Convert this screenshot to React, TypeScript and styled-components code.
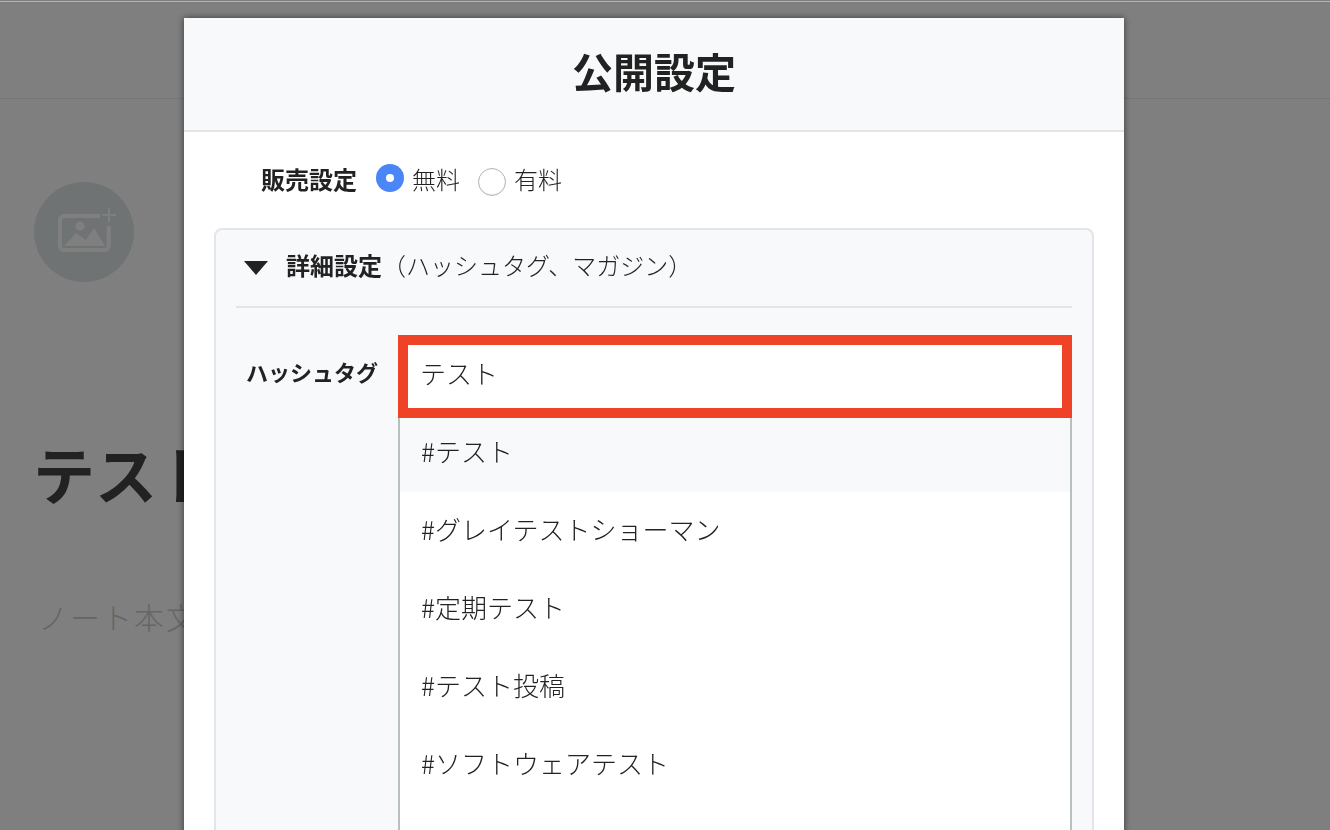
import React from 'react';
import styled, { createGlobalStyle } from 'styled-components';

const hashtags = ['#テスト', '#グレイテストショーマン', '#定期テスト', '#テスト投稿', '#ソフトウェアテスト', ''];

const App: React.FC = () => {
  return (
    <>
      <GlobalStyle />
      <Page>
        <TopBar />
        <Editor>
          <EyeCatch>
            <svg width='100' height='100' viewBox='0 0 100 100' fill='none'>
              <path
                d='M66 34H30a4 4 0 0 0-4 4v26a4 4 0 0 0 4 4h40.7a4 4 0 0 0 4-4V44'
                stroke='#fff'
                strokeWidth='4'
              />
              <path d='M75 26v14M68 33h14' stroke='#fff' strokeWidth='2' />
              <circle cx='46' cy='44' r='4.5' fill='#fff' />
              <path d='M30 64l12-13 10 7 8-12 11 18z' fill='#fff' />
            </svg>
          </EyeCatch>
          <NoteTitle>テスト</NoteTitle>
          <NoteBody>ノート本文</NoteBody>
        </Editor>
      </Page>
      <Overlay>
        <Modal>
          <ModalHeader>
            <h1>公開設定</h1>
          </ModalHeader>
          <SalesRow>
            <strong>販売設定</strong>
            <RadioOption>
              <Radio $checked />
              無料
            </RadioOption>
            <RadioOption>
              <Radio />
              有料
            </RadioOption>
          </SalesRow>
          <DetailBox>
            <DetailHead>
              <svg width='24' height='14' viewBox='0 0 24 14'>
                <path d='M0 0h24L12 14z' fill='#222' />
              </svg>
              <p>
                <strong>詳細設定</strong>（ハッシュタグ、マガジン）
              </p>
            </DetailHead>
            <TagRow>
              <TagLabel>ハッシュタグ</TagLabel>
              <TagField>
                <TagInput readOnly value='テスト' />
                <TagList>
                  {hashtags.map((tag, index) => (
                    <TagItem key={index} $active={index === 0}>
                      {tag}
                    </TagItem>
                  ))}
                </TagList>
              </TagField>
            </TagRow>
          </DetailBox>
        </Modal>
      </Overlay>
    </>
  );
};

const GlobalStyle = createGlobalStyle`
  html, body {
    margin: 0;
    height: 830px;
    overflow: hidden;
    background: #fff;
    color: #222;
    font-family: "Noto Sans CJK JP", "Noto Sans", sans-serif;
  }

  * {
    box-sizing: border-box;
  }
`;

const Page = styled.main`
  height: 830px;
`;

const TopBar = styled.header`
  height: 99px;
  border-bottom: 1px solid #ececec;
`;

const Editor = styled.section`
  padding: 83px 0 0 34px;
`;

const EyeCatch = styled.div`
  width: 100px;
  height: 100px;
  border-radius: 50%;
  background: #dfe6e8;
  display: flex;

  svg {
    display: block;
  }
`;

const NoteTitle = styled.h2`
  margin: 149px 0 0 -1px;
  font-size: 62px;
  line-height: 84px;
  font-weight: 700;
  color: #444;
`;

const NoteBody = styled.p`
  margin: 81px 0 0 4px;
  font-size: 30px;
  font-weight: 300;
  line-height: 40px;
  letter-spacing: 2px;
  color: #ccc;
`;

const Overlay = styled.div`
  position: fixed;
  inset: 0;
  background: rgba(0, 0, 0, 0.5);
  display: flex;
  justify-content: center;
  overflow: hidden;

  &::before {
    content: '';
    position: absolute;
    top: 1px;
    left: 0;
    right: 0;
    height: 1px;
    background: #b8b2b8;
  }
`;

const Modal = styled.div`
  width: 940px;
  height: 1100px;
  flex-shrink: 0;
  margin: 18px 0 0 -22px;
  background: #fff;
  box-shadow: 0 0 7px rgba(0, 0, 0, 0.55);
`;

const ModalHeader = styled.div`
  height: 114px;
  background: #f7f9fb;
  border-bottom: 2px solid #e3e5e8;
  display: flex;
  align-items: center;
  justify-content: center;

  h1 {
    margin: 0 0 8px;
    font-size: 41px;
    line-height: 56px;
    font-weight: 700;
  }
`;

const SalesRow = styled.div`
  height: 96px;
  padding: 0 0 4px 77px;
  display: flex;
  align-items: center;
  font-size: 24px;
  font-weight: 300;

  strong {
    font-weight: 700;
    margin-right: 19px;
  }
`;

const RadioOption = styled.label`
  display: flex;
  align-items: center;
  gap: 8px;
  margin-right: 18px;
`;

const Radio = styled.span<{ $checked?: boolean }>`
  width: 28px;
  height: 28px;
  border-radius: 50%;
  display: flex;
  align-items: center;
  justify-content: center;
  background: ${({ $checked }) => ($checked ? '#4a86f5' : '#fff')};
  border: ${({ $checked }) => ($checked ? 'none' : '1px solid #b4b4b4')};
  margin-top: ${({ $checked }) => ($checked ? '0' : '8px')};
  box-shadow: ${({ $checked }) => ($checked ? 'none' : 'inset 0 -1px 1px rgba(0, 0, 0, 0.08)')};

  &::after {
    content: '';
    display: ${({ $checked }) => ($checked ? 'block' : 'none')};
    width: 8px;
    height: 8px;
    border-radius: 50%;
    background: #fff;
  }
`;

const DetailBox = styled.div`
  width: 880px;
  margin-left: 30px;
  height: 800px;
  background: #f7f9fb;
  border: 2px solid #e3e5e8;
  border-radius: 8px;
  padding: 0 20px;
`;

const DetailHead = styled.div`
  height: 78px;
  padding: 0 0 8px 8px;
  border-bottom: 2px solid #e3e5e8;
  display: flex;
  align-items: center;
  gap: 18px;
  font-size: 24px;
  font-weight: 300;

  svg {
    flex-shrink: 0;
    margin-top: 8px;
  }

  p {
    margin: 0;
  }

  strong {
    font-weight: 700;
  }
`;

const TagRow = styled.div`
  display: flex;
  margin-top: 27px;
`;

const TagLabel = styled.div`
  width: 162px;
  padding: 20px 0 0 10px;
  font-size: 22px;
  line-height: 32px;
  font-weight: 700;
  flex-shrink: 0;
`;

const TagField = styled.div`
  width: 674px;
`;

const TagInput = styled.input`
  display: block;
  width: 100%;
  height: 83px;
  padding: 0 12px 8px;
  border: 10px solid #ee4326;
  border-radius: 0;
  outline: none;
  background: #fff;
  color: #222;
  font-family: inherit;
  font-size: 26px;
  font-weight: 300;
`;

const TagList = styled.ul`
  margin: 0;
  padding: 0;
  list-style: none;
  background: #fff;
  border-left: 2px solid #b9c0c0;
  border-right: 2px solid #b9c0c0;
`;

const TagItem = styled.li<{ $active?: boolean }>`
  height: ${({ $active }) => ($active ? '74px' : '78px')};
  padding: 0 21px ${({ $active }) => ($active ? '9px' : '5px')};
  display: flex;
  align-items: center;
  font-size: 26px;
  font-weight: 300;
  background: ${({ $active }) => ($active ? '#f7f9fb' : '#fff')};
`;

export default App;
